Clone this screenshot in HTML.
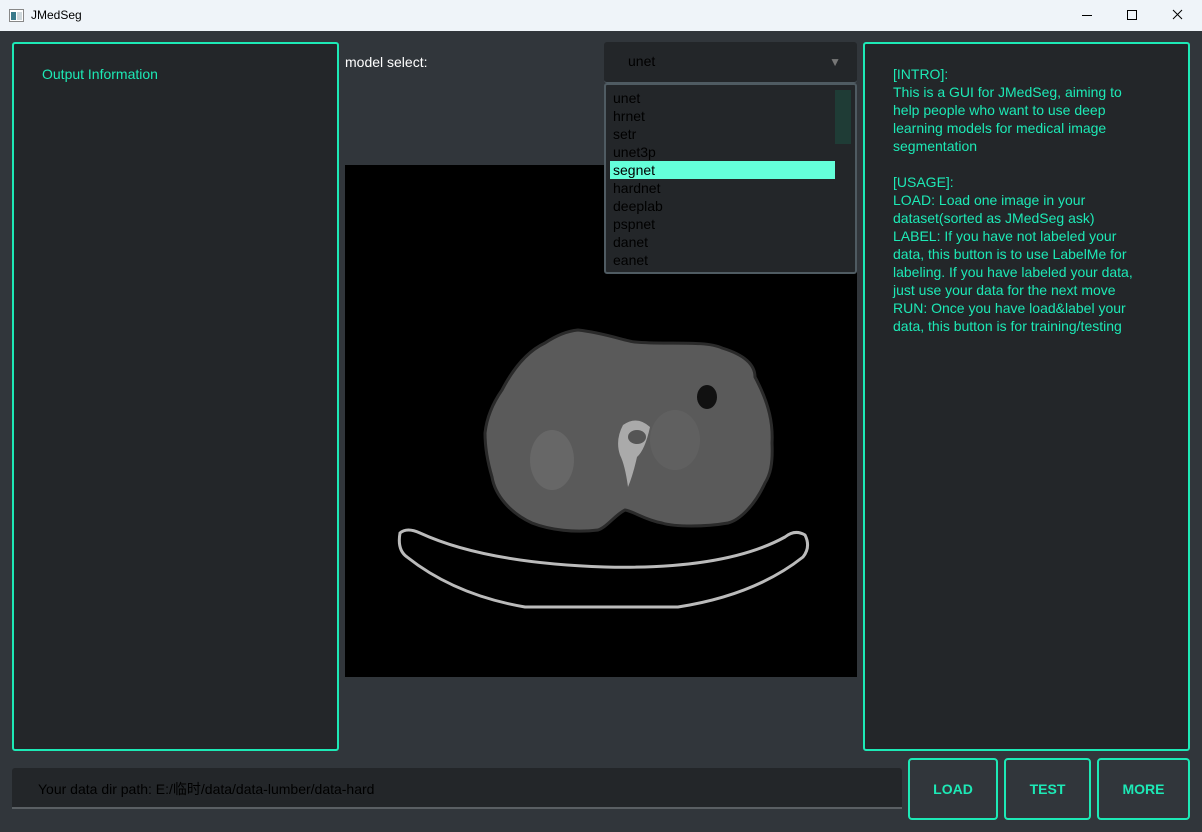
<!DOCTYPE html>
<html><head><meta charset="utf-8"><style>
*{margin:0;padding:0;box-sizing:border-box}
body{width:1202px;height:832px;background:#31363b;font-family:"Liberation Sans","Noto Sans CJK SC",sans-serif;position:relative;overflow:hidden}
.tb{position:absolute;left:0;top:0;width:1202px;height:31px;background:#eff4f9;}
.tb .t{position:absolute;left:31px;top:8px;font-size:12px;color:#000}
.panel{position:absolute;background:#232629;border:2px solid #1de9b6;border-radius:3px}
.teal{color:#1de9b6}
.btn{position:absolute;top:758px;height:62px;border:2px solid #1de9b6;border-radius:4px;color:#1de9b6;font-weight:bold;font-size:14px;display:flex;align-items:center;justify-content:center}
.dd div{height:18px;line-height:18px;padding-left:7px;font-size:14px;color:#000}
</style></head><body>
<div class="tb">
<svg style="position:absolute;left:9px;top:9px" width="15" height="13"><rect x="0.5" y="0.5" width="14" height="12" fill="#fff" stroke="#888"/><rect x="2" y="3" width="5" height="8" fill="#3a7a8a"/><rect x="8" y="3" width="5" height="8" fill="#cfd8dc"/></svg>
<div class="t">JMedSeg</div>
<svg style="position:absolute;left:1060px;top:0" width="142" height="31"><line x1="22" y1="15.5" x2="32" y2="15.5" stroke="#000"/><rect x="67.5" y="10.5" width="9" height="9" fill="none" stroke="#000"/><path d="M113 10l9 9M122 10l-9 9" stroke="#000"/></svg>
</div>
<div class="panel" style="left:12px;top:42px;width:327px;height:709px"><div class="teal" style="position:absolute;left:28px;top:22px;font-size:14px">Output Information</div></div>
<div style="position:absolute;left:345px;top:54px;font-size:14px;color:#fff">model select:</div>
<div style="position:absolute;left:604px;top:42px;width:253px;height:41px;background:#232629;border-radius:3px;border-bottom:1px solid #4f5b62"><span style="position:absolute;left:24px;top:11px;font-size:14px;color:#000">unet</span><span style="position:absolute;right:16px;top:13px;font-size:12px;color:#777">▼</span></div>
<div style="position:absolute;left:345px;top:165px;width:512px;height:512px;background:#000">
<svg width="512" height="512">
<path d="M55 368 Q52 385 62 392 Q110 430 180 442 L333 442 Q410 430 458 392 Q466 382 460 370 Q450 364 440 372 Q380 405 260 402 Q140 398 75 368 Q62 362 55 368 Z" fill="none" stroke="#bbb" stroke-width="3"/>
<path d="M233 165 C260 168 280 176 290 177 C320 180 360 175 377 183 C400 190 410 200 410 212 C425 240 428 260 427 278 C428 300 425 310 420 318 C410 340 395 355 383 358 C360 362 330 362 317 358 C300 355 288 346 280 345 C270 350 262 362 253 365 C230 368 205 365 187 358 C165 348 150 330 147 312 C142 295 140 280 140 268 C142 250 150 235 157 225 C170 200 185 185 200 178 C212 170 222 166 233 165 Z" fill="#5a5a5a" stroke="#2a2a2a" stroke-width="3"/>
<ellipse cx="207" cy="295" rx="22" ry="30" fill="#676767"/>
<ellipse cx="330" cy="275" rx="25" ry="30" fill="#606060"/>
<ellipse cx="362" cy="232" rx="10" ry="12" fill="#111"/>
<path d="M278 260 Q292 250 305 262 Q300 285 292 292 Q288 310 283 322 Q280 300 275 290 Q270 275 278 260Z" fill="#aaa"/>
<ellipse cx="292" cy="272" rx="9" ry="7" fill="#555"/>
</svg></div>
<div class="dd" style="position:absolute;left:604px;top:83px;width:253px;height:191px;background:#232629;border:2px solid #4f5b62;border-radius:3px;padding-top:4px">
<div style="position:absolute;right:4px;top:5px;width:16px;height:54px;background:#1f3c36"></div>
<div>unet</div><div>hrnet</div><div>setr</div><div>unet3p</div><div style="background:#64ffda;margin-left:4px;padding-left:3px;width:225px">segnet</div><div>hardnet</div><div>deeplab</div><div>pspnet</div><div>danet</div><div>eanet</div>
</div>
<div class="panel" style="left:863px;top:42px;width:327px;height:709px"><div class="teal" style="position:absolute;left:28px;top:21px;font-size:14px;line-height:18px;width:258px">[INTRO]:<br>This is a GUI for JMedSeg, aiming to help people who want to use deep learning models for medical image segmentation<br><br>[USAGE]:<br>LOAD: Load one image in your dataset(sorted as JMedSeg ask)<br>LABEL: If you have not labeled your data, this button is to use LabelMe for labeling. If you have labeled your data, just use your data for the next move<br>RUN: Once you have load&amp;label your data, this button is for training/testing</div></div>
<div style="position:absolute;left:12px;top:768px;width:890px;height:41px;background:#232629;border-bottom:2px solid #5a5f63;border-radius:3px 3px 0 0"><span style="position:absolute;left:26px;top:11px;font-size:14px;color:#000">Your data dir path: E:/临时/data/data-lumber/data-hard</span></div>
<div class="btn" style="left:908px;width:90px">LOAD</div>
<div class="btn" style="left:1004px;width:87px">TEST</div>
<div class="btn" style="left:1097px;width:93px">MORE</div>
</body></html>
